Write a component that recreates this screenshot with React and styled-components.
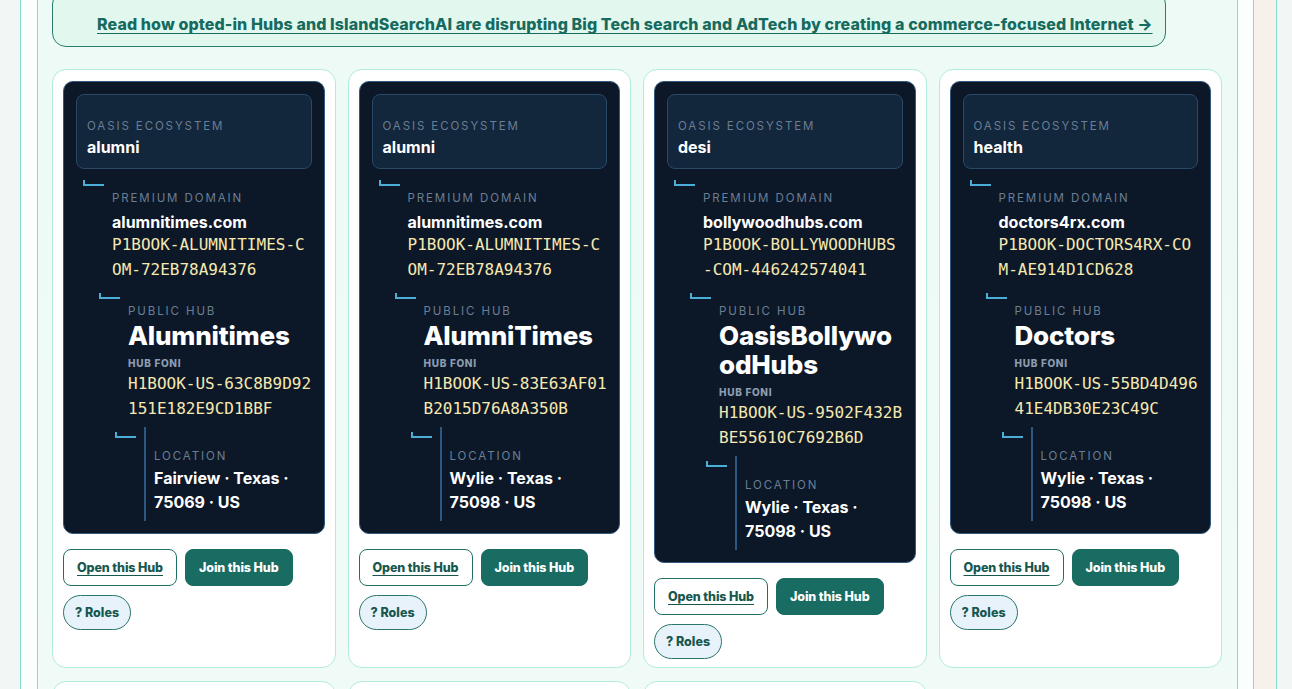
import React from 'react'
import styled, {createGlobalStyle} from 'styled-components'

const GlobalStyle = createGlobalStyle`
  html, body {
    margin: 0;
    padding: 0;
    background: #f2f7f5;
    font-family: Inter, "Noto Sans", "Liberation Sans", sans-serif;
    overflow: hidden;
  }
`;

const Page = styled('div')`
  display: flex;
  align-items: stretch;
  padding-left: 20px;
  margin-top: -43px;
  min-height: 760px;
`;

const Frame = styled('div')`
  flex: 0 0 1234px;
  box-sizing: border-box;
  background: #fafefc;
  border-left: 1px solid #86dccb;
  border-right: 1px solid #86dccb;
  padding: 16px 15px 16px 16px;
`;

const Rail = styled('div')`
  flex: 0 0 23px;
  box-sizing: border-box;
  background: #f6f2eb;
  border-right: 1px solid #86dccb;
`;

const Panel = styled('section')`
  height: 100%;
  box-sizing: border-box;
  background: linear-gradient(180deg, #edfaf5 0%, #f3fcf9 100%);
  border-left: 1px solid #86dccb;
  border-right: 1px solid #86dccb;
  padding: 17px 15px 20px 14px;
`;

const Banner = styled('a')`
  display: inline-block;
  box-sizing: border-box;
  width: 1114px;
  background: #e2f8ef;
  border: 1px solid #2a7d6d;
  border-radius: 14px;
  padding: 23px 12px 12px 44px;
  color: #176b5e;
  font-size: 16px;
  font-weight: 800;
  line-height: 20px;
  letter-spacing: 0.1px;
  text-decoration: underline;
  text-underline-offset: 3px;
  white-space: nowrap;
`;

const Grid = styled('div')`
  display: grid;
  grid-template-columns: repeat(4, 1fr);
  gap: 13px 12px;
  margin-top: 22px;
`;

const Card = styled('article')`
  background: #ffffff;
  border: 1px solid #b2ecdd;
  border-radius: 14px;
  padding: 11px 10px 8px 10px;
  min-width: 0;
`;

const DarkCard = styled('div')`
  background: #0c1828;
  border: 1px solid #335a7e;
  border-radius: 10px;
  padding: 12px;
`;

const EcoBox = styled('div')`
  background: #12263c;
  border: 1px solid #2a4966;
  border-radius: 8px;
  padding: 24px 10px 11px 10px;
`;

const Label = styled('div')`
  font-size: 11.5px;
  line-height: 14px;
  letter-spacing: 1.9px;
  text-transform: uppercase;
  color: #6b7e94;
  white-space: nowrap;
`;

const SmallLabel = styled('div')`
  margin-top: 6px;
  margin-bottom: 2px;
  font-size: 10px;
  line-height: 14px;
  font-weight: 800;
  letter-spacing: 0.7px;
  text-transform: uppercase;
  color: #8c9cb0;
`;

const Value = styled('div')`
  margin-top: ${p => p.gap || 6}px;
  color: #ffffff;
  font-size: 16px;
  line-height: ${p => p.lh || 22}px;
  font-weight: 700;
`;

const HubName = styled('div')`
  margin-top: 3px;
  color: #ffffff;
  font-size: 26px;
  line-height: 29px;
  font-weight: 800;
  letter-spacing: -0.2px;
  word-break: break-all;
`;

const Code = styled('div')`
  font-family: "DejaVu Sans Mono", "Liberation Mono", monospace;
  font-size: 16px;
  line-height: 24.5px;
  color: #f6e8b1;
  word-break: break-all;
`;

const Branch = styled('div')`
  display: flex;
  align-items: flex-start;
  gap: 8px;
  margin-top: ${p => p.top}px;
  margin-left: ${p => 7 + p.level * 16}px;
`;

// the little "└─" elbow that links a level to the one above
const Elbow = styled('span')`
  flex: 0 0 21px;
  height: 6px;
  margin-top: ${p => p.drop}px;
  box-sizing: border-box;
  border-left: 2px solid #4aaed6;
  border-bottom: 2px solid #4aaed6;
`;

const BranchBody = styled('div')`
  flex: 1;
  min-width: 0;
  padding-top: 14px;
`;

const LocationBody = styled('div')`
  flex: 1;
  min-width: 0;
  border-left: 2px solid #2a5a84;
  padding: 22px 0 7px 8px;
`;

const Actions = styled('div')`
  display: flex;
  flex-wrap: wrap;
  gap: 9px 8px;
  margin-top: 15px;
`;

const OpenButton = styled('button')`
  height: 37px;
  padding: 0 13px;
  background: #ffffff;
  border: 1px solid #227065;
  border-radius: 8px;
  color: #17574e;
  font-family: inherit;
  font-size: 12.5px;
  font-weight: 800;
  letter-spacing: -0.1px;
  text-decoration: underline;
  text-underline-offset: 3px;
`;

const JoinButton = styled('button')`
  height: 37px;
  padding: 0 13px;
  background: #186c62;
  border: 1px solid #186c62;
  border-radius: 8px;
  color: #ffffff;
  font-family: inherit;
  font-size: 12.5px;
  font-weight: 800;
  letter-spacing: -0.1px;
`;

const RolesRow = styled('div')`
  flex-basis: 100%;
  display: flex;
`;

const RolesButton = styled('button')`
  height: 35px;
  padding: 0 11px;
  background: #e7f2fb;
  border: 1px solid #2a7569;
  border-radius: 18px;
  color: #17574e;
  font-family: inherit;
  font-size: 12.5px;
  font-weight: 800;
`;

const hubs = [
    {
        eco: 'alumni', domain: 'alumnitimes.com', pcode: 'P1BOOK-ALUMNITIMES-COM-72EB78A94376',
        name: 'Alumnitimes', hcode: 'H1BOOK-US-63C8B9D92151E182E9CD1BBF', place: 'Fairview · Texas · 75069 · US',
    },
    {
        eco: 'alumni', domain: 'alumnitimes.com', pcode: 'P1BOOK-ALUMNITIMES-COM-72EB78A94376',
        name: 'AlumniTimes', hcode: 'H1BOOK-US-83E63AF01B2015D76A8A350B', place: 'Wylie · Texas · 75098 · US',
    },
    {
        eco: 'desi', domain: 'bollywoodhubs.com', pcode: 'P1BOOK-BOLLYWOODHUBS-COM-446242574041',
        name: 'OasisBollywoodHubs', hcode: 'H1BOOK-US-9502F432BBE55610C7692B6D', place: 'Wylie · Texas · 75098 · US',
    },
    {
        eco: 'health', domain: 'doctors4rx.com', pcode: 'P1BOOK-DOCTORS4RX-COM-AE914D1CD628',
        name: 'Doctors', hcode: 'H1BOOK-US-55BD4D49641E4DB30E23C49C', place: 'Wylie · Texas · 75098 · US',
    },
    {
        eco: 'desi', domain: 'bollywoodhubs.com', pcode: 'P1BOOK-BOLLYWOODHUBS-COM-446242574041',
        name: 'BollywoodHubs', hcode: 'H1BOOK-US-1F0A23C9D84B7E6512AC03DE', place: 'Plano · Texas · 75024 · US',
    },
    {
        eco: 'health', domain: 'doctors4rx.com', pcode: 'P1BOOK-DOCTORS4RX-COM-AE914D1CD628',
        name: 'Doctors4Rx', hcode: 'H1BOOK-US-7C2E90B5A31D64F8E0B9C217', place: 'Frisco · Texas · 75034 · US',
    },
    {
        eco: 'alumni', domain: 'alumnitimes.com', pcode: 'P1BOOK-ALUMNITIMES-COM-72EB78A94376',
        name: 'Alumni', hcode: 'H1BOOK-US-D04B6E21F93A8C57B16E04AF', place: 'Allen · Texas · 75002 · US',
    },
];

const HubCard = ({hub}) => (
    <Card>
        <DarkCard>
            <EcoBox>
                <Label>Oasis Ecosystem</Label>
                <Value gap={4} lh={20}>{hub.eco}</Value>
            </EcoBox>

            <Branch level={0} top={8}>
                <Elbow drop={3}/>
                <BranchBody>
                    <Label>Premium Domain</Label>
                    <Value>{hub.domain}</Value>
                    <Code>{hub.pcode}</Code>
                </BranchBody>
            </Branch>

            <Branch level={1} top={8}>
                <Elbow drop={3}/>
                <BranchBody>
                    <Label>Public Hub</Label>
                    <HubName>{hub.name}</HubName>
                    <SmallLabel>Hub Foni</SmallLabel>
                    <Code>{hub.hcode}</Code>
                </BranchBody>
            </Branch>

            <Branch level={2} top={6}>
                <Elbow drop={5}/>
                <LocationBody>
                    <Label>Location</Label>
                    <Value gap={3} lh={24}>{hub.place}</Value>
                </LocationBody>
            </Branch>
        </DarkCard>

        <Actions>
            <OpenButton>Open this Hub</OpenButton>
            <JoinButton>Join this Hub</JoinButton>
            <RolesRow>
                <RolesButton>? Roles</RolesButton>
            </RolesRow>
        </Actions>
    </Card>
);

export default function App() {
    return (
        <>
            <GlobalStyle/>
            <Page>
                <Frame>
                    <Panel>
                        <Banner>
                            Read how opted-in Hubs and IslandSearchAI are disrupting Big Tech search and AdTech by creating a commerce-focused Internet →
                        </Banner>
                        <Grid>
                            {hubs.map((hub, i) => <HubCard key={i} hub={hub}/>)}
                        </Grid>
                    </Panel>
                </Frame>
                <Rail/>
            </Page>
        </>
    )
}
